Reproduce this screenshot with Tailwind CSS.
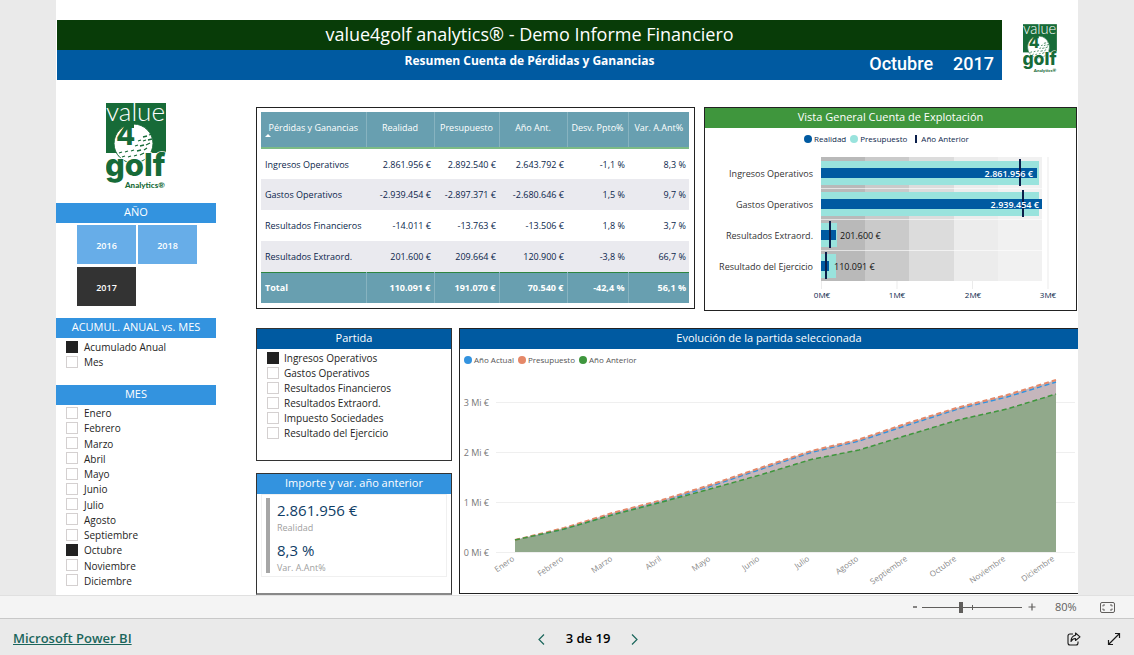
<!DOCTYPE html>
<html lang="es">
<head>
<meta charset="utf-8">
<title>value4golf analytics® - Demo Informe Financiero</title>
<script src="https://cdn.jsdelivr.net/npm/@tailwindcss/browser@4"></script>
</head>
<body class="flex min-h-screen flex-col bg-[#eaeaea] font-['Open_Sans','Noto_Sans',sans-serif] text-[#252423]">

<svg class="hidden" aria-hidden="true">
  <symbol id="logo" viewBox="0 0 62 88">
    <rect width="60" height="50" fill="#176b38"/>
    <text x="0" y="18" font-family="Lato" font-weight="300" font-size="26" fill="#fff">value</text>
    <circle cx="27.500" cy="40.500" r="19.500" fill="#fff" stroke="#176b38" stroke-width="1"/>
    <path d="M22 19h6v6h-6z" fill="#176b38"/>
    <text x="10" y="42" font-family="Inter" font-weight="800" font-size="28" fill="#176b38">4</text>
    <path d="M37 34l4-1M43 32l3-1M32 38l3-1M37 38l3-1M42 37l4-1M29 43l3-1M34 43l4-1M40 42l4-2M13 50l3-1M19 49l3-1M25 48l3-1M31 48l4-1M38 47l3-2M16 54l3-1M22 54l3-1M28 53l3-1M34 52l4-2" stroke="#176b38" stroke-width="1.300"/>
    <text x="-1" y="73" font-family="Inter" font-weight="800" font-size="31" fill="#176b38" stroke="#fff" stroke-width="1.500" paint-order="stroke">golf</text>
    <text x="19" y="85" font-family="Lato" font-weight="900" font-size="8" fill="#176b38" stroke="#fff" stroke-width="1.500" paint-order="stroke">Analytics®</text>
  </symbol>
</svg>

<main class="mx-14 flex-1 bg-white pt-5">
  <header class="flex items-start pl-px">
    <div class="flex-1">
      <h1 class="h-[30px] bg-[#083c08] text-center text-lg leading-[28px] text-white">value4golf analytics® - Demo Informe Financiero</h1>
      <div class="grid h-[30px] grid-cols-[1fr_auto_1fr] bg-[#005aa1] text-white">
        <span></span>
        <h2 class="text-[12px] leading-[21px] font-bold">Resumen Cuenta de Pérdidas y Ganancias</h2>
        <p class="flex justify-end gap-5 pr-2 font-[Roboto] text-lg leading-[27px] font-medium"><span>Octubre</span><span>2017</span></p>
      </div>
    </div>
    <svg class="mt-1 mr-5 ml-[21px] h-[50px] w-[35px]" role="img" aria-label="value4golf Analytics"><use href="#logo"/></svg>
  </header>

  <div class="flex gap-10">
    <aside class="mt-[23px] w-40 shrink-0">
      <svg class="ml-[50px] h-[88px] w-[62px]" role="img" aria-label="value4golf Analytics"><use href="#logo"/></svg>
      <h3 class="mt-3 h-5 bg-[#3393df] text-center text-[11px] leading-[17px] text-white">AÑO</h3>
      <div class="mt-[2px] ml-[21px] grid w-[120px] grid-cols-2 gap-x-[2px] gap-y-[3px] text-[9px] font-semibold text-white">
        <button class="h-[39px] bg-[#67ade8] pt-[2px]">2016</button>
        <button class="h-[39px] bg-[#67ade8] pt-[2px]">2018</button>
        <button class="h-[39px] bg-[#333333] pt-[2px]" aria-pressed="true">2017</button>
      </div>
      <h3 class="mt-3 h-5 bg-[#3393df] text-center text-[11px] leading-[17px] text-white">ACUMUL. ANUAL vs. MES</h3>
      <div class="mt-[2px] pl-[10px] text-[10px] leading-[15px]">
        <label class="flex items-center gap-[6px]"><input type="checkbox" checked class="mb-[2px] size-3 appearance-none border border-[#d4d0d0] checked:border-[#222] checked:bg-[#222]">Acumulado Anual</label>
        <label class="flex items-center gap-[6px]"><input type="checkbox" class="mb-[2px] size-3 appearance-none border border-[#d4d0d0] checked:border-[#222] checked:bg-[#222]">Mes</label>
      </div>
      <h3 class="mt-[15px] h-5 bg-[#3393df] text-center text-[11px] leading-[17px] text-white">MES</h3>
      <div class="mt-px flex h-[183px] flex-col justify-between pl-[10px] text-[10px] leading-[15px]">
        <label class="flex items-center gap-[6px]"><input type="checkbox" class="mb-[2px] size-3 appearance-none border border-[#d4d0d0] checked:border-[#222] checked:bg-[#222]">Enero</label>
        <label class="flex items-center gap-[6px]"><input type="checkbox" class="mb-[2px] size-3 appearance-none border border-[#d4d0d0] checked:border-[#222] checked:bg-[#222]">Febrero</label>
        <label class="flex items-center gap-[6px]"><input type="checkbox" class="mb-[2px] size-3 appearance-none border border-[#d4d0d0] checked:border-[#222] checked:bg-[#222]">Marzo</label>
        <label class="flex items-center gap-[6px]"><input type="checkbox" class="mb-[2px] size-3 appearance-none border border-[#d4d0d0] checked:border-[#222] checked:bg-[#222]">Abril</label>
        <label class="flex items-center gap-[6px]"><input type="checkbox" class="mb-[2px] size-3 appearance-none border border-[#d4d0d0] checked:border-[#222] checked:bg-[#222]">Mayo</label>
        <label class="flex items-center gap-[6px]"><input type="checkbox" class="mb-[2px] size-3 appearance-none border border-[#d4d0d0] checked:border-[#222] checked:bg-[#222]">Junio</label>
        <label class="flex items-center gap-[6px]"><input type="checkbox" class="mb-[2px] size-3 appearance-none border border-[#d4d0d0] checked:border-[#222] checked:bg-[#222]">Julio</label>
        <label class="flex items-center gap-[6px]"><input type="checkbox" class="mb-[2px] size-3 appearance-none border border-[#d4d0d0] checked:border-[#222] checked:bg-[#222]">Agosto</label>
        <label class="flex items-center gap-[6px]"><input type="checkbox" class="mb-[2px] size-3 appearance-none border border-[#d4d0d0] checked:border-[#222] checked:bg-[#222]">Septiembre</label>
        <label class="flex items-center gap-[6px]"><input type="checkbox" checked class="mb-[2px] size-3 appearance-none border border-[#d4d0d0] checked:border-[#222] checked:bg-[#222]">Octubre</label>
        <label class="flex items-center gap-[6px]"><input type="checkbox" class="mb-[2px] size-3 appearance-none border border-[#d4d0d0] checked:border-[#222] checked:bg-[#222]">Noviembre</label>
        <label class="flex items-center gap-[6px]"><input type="checkbox" class="mb-[2px] size-3 appearance-none border border-[#d4d0d0] checked:border-[#222] checked:bg-[#222]">Diciembre</label>
      </div>
    </aside>

    <div class="mt-[27px] min-w-0 flex-1">
      <div class="grid grid-cols-[minmax(0,439fr)_minmax(0,373fr)] items-start gap-[9px] pr-px">
        <section class="border border-[#222] pt-1 pr-[5px] pb-[5px] pl-1">
          <table class="w-full table-fixed text-right text-[9px] leading-[15px] text-[#0b1f4b]">
            <colgroup><col class="w-[105px]"><col class="w-[68px]"><col class="w-[65px]"><col class="w-[68px]"><col class="w-[61px]"><col></colgroup>
            <thead>
              <tr class="h-[36px] border-b-2 border-[#7dbb85] bg-[#689fb0] text-center text-white">
                <th class="relative border-r border-[#87b3c0] pb-[5px] font-normal whitespace-nowrap">Pérdidas y Ganancias
                  <svg class="absolute bottom-[10px] left-1 h-[3px] w-[6px]" viewBox="0 0 6 3"><path d="M0 3L3 0L6 3z" fill="#fff"/></svg></th>
                <th class="border-r border-[#87b3c0] pb-[5px] font-normal whitespace-nowrap">Realidad</th>
                <th class="border-r border-[#87b3c0] pb-[5px] font-normal whitespace-nowrap">Presupuesto</th>
                <th class="border-r border-[#87b3c0] pb-[5px] font-normal whitespace-nowrap">Año Ant.</th>
                <th class="border-r border-[#87b3c0] pb-[5px] font-normal whitespace-nowrap">Desv. Ppto%</th>
                <th class="pb-[5px] font-normal whitespace-nowrap">Var. A.Ant%</th>
              </tr>
            </thead>
            <tbody>
              <tr class="h-[31px]"><td class="pl-1 text-left whitespace-nowrap">Ingresos Operativos</td><td class="pr-[3px]">2.861.956 €</td><td class="pr-[3px]">2.892.540 €</td><td class="pr-[3px]">2.643.792 €</td><td class="pr-[3px]">-1,1 %</td><td class="pr-[3px]">8,3 %</td></tr>
              <tr class="h-[31px] bg-[#eaeaef]"><td class="pl-1 text-left whitespace-nowrap">Gastos Operativos</td><td class="pr-[3px]">-2.939.454 €</td><td class="pr-[3px]">-2.897.371 €</td><td class="pr-[3px]">-2.680.646 €</td><td class="pr-[3px]">1,5 %</td><td class="pr-[3px]">9,7 %</td></tr>
              <tr class="h-[31px]"><td class="pl-1 text-left whitespace-nowrap">Resultados Financieros</td><td class="pr-[3px]">-14.011 €</td><td class="pr-[3px]">-13.763 €</td><td class="pr-[3px]">-13.506 €</td><td class="pr-[3px]">1,8 %</td><td class="pr-[3px]">3,7 %</td></tr>
              <tr class="h-[31px] bg-[#eaeaef]"><td class="pl-1 text-left whitespace-nowrap">Resultados Extraord.</td><td class="pr-[3px]">201.600 €</td><td class="pr-[3px]">209.664 €</td><td class="pr-[3px]">120.900 €</td><td class="pr-[3px]">-3,8 %</td><td class="pr-[3px]">66,7 %</td></tr>
            </tbody>
            <tfoot>
              <tr class="h-[31px] border-t border-[#2e8540] bg-[#689fb0] font-bold text-white"><th scope="row" class="border-r border-[#87b3c0] pl-1 text-left">Total</th><td class="border-r border-[#87b3c0] pr-[3px]">110.091 €</td><td class="border-r border-[#87b3c0] pr-[3px]">191.070 €</td><td class="border-r border-[#87b3c0] pr-[3px]">70.540 €</td><td class="border-r border-[#87b3c0] pr-[3px]">-42,4 %</td><td class="pr-[3px]">56,1 %</td></tr>
            </tfoot>
          </table>
        </section>

        <section class="border border-[#222]">
          <h3 class="h-5 bg-[#3f963d] text-center text-[11px] leading-[18px] text-white">Vista General Cuenta de Explotación</h3>
          <div class="flex h-[22px] items-center justify-center gap-1 pr-2 text-[8px] text-[#0b1f4b]">
            <span class="flex items-center gap-[2px]"><i class="size-2 rounded-full bg-[#005aa1]"></i>Realidad</span>
            <span class="flex items-center gap-[2px]"><i class="size-2 rounded-full bg-[#99e3dd]"></i>Presupuesto</span>
            <span class="ml-1 flex items-center gap-1"><i class="h-2 w-[2px] bg-[#0b1f4b]"></i>Año Anterior</span>
          </div>
          <svg class="block h-auto w-full" viewBox="705 150 371 160" font-size="9" fill="#333" role="img" aria-label="Realidad, presupuesto y año anterior por partida">
            <path d="M821.500 157V289M897 157V289M972.500 157V289M1048 157V289" stroke="#ebebeb" stroke-width="1"/>
            <g>
              <rect x="821" y="157" width="44" height="124" fill="#b9b9b9"/>
              <rect x="865" y="157" width="44" height="124" fill="#cacaca"/>
              <rect x="909" y="157" width="45" height="124" fill="#dcdcdc"/>
              <rect x="954" y="157" width="44" height="124" fill="#ececec"/>
              <rect x="998" y="157" width="44" height="124" fill="#f1f1f1"/>
              <path d="M821 188.500H1042M821 219.500H1042M821 250.500H1042" stroke="#fff" stroke-opacity=".6"/>
            </g>
            <g fill="#99e3dd">
              <rect x="821" y="161" width="218" height="24"/><rect x="821" y="192" width="218" height="24"/>
              <rect x="821" y="223" width="16" height="24"/><rect x="821" y="254" width="15" height="24"/>
            </g>
            <g fill="#005aa1">
              <rect x="821" y="168" width="216" height="10"/><rect x="821" y="199" width="221" height="10"/>
              <rect x="821" y="230" width="15" height="10"/><rect x="821" y="261" width="8" height="10"/>
            </g>
            <path d="M1020 159V186M1023 190V217M830 221V248M826 252V279" stroke="#0b1f4b" stroke-width="2"/>
            <g text-anchor="end" font-weight="600" fill="#fff"><text x="1033" y="177">2.861.956 €</text><text x="1039" y="208">2.939.454 €</text></g>
            <g fill="#111"><text x="840" y="239">201.600 €</text><text x="834" y="270">110.091 €</text></g>
            <g text-anchor="end">
              <text x="813" y="177">Ingresos Operativos</text><text x="813" y="208">Gastos Operativos</text>
              <text x="813" y="239">Resultados Extraord.</text><text x="813" y="270">Resultado del Ejercicio</text>
            </g>
            <g text-anchor="middle" fill="#0b1f4b" font-size="8"><text x="822" y="298">0M€</text><text x="897" y="298">1M€</text><text x="973" y="298">2M€</text><text x="1048" y="298">3M€</text></g>
          </svg>
        </section>
      </div>

      <div class="mt-[17px] grid grid-cols-[196px_1fr] gap-[7px]">
        <div class="flex flex-col gap-3">
          <section class="h-[133px] border border-[#333]">
            <h3 class="h-5 bg-[#005aa1] text-center text-[11px] leading-[18px] text-white">Partida</h3>
            <div class="mt-[2px] pl-[10px] text-[10px] leading-[15px]">
              <label class="flex items-center gap-[5px]"><input type="checkbox" checked class="mb-[2px] size-3 appearance-none border border-[#d4d0d0] checked:border-[#222] checked:bg-[#222]">Ingresos Operativos</label>
              <label class="flex items-center gap-[5px]"><input type="checkbox" class="mb-[2px] size-3 appearance-none border border-[#d4d0d0] checked:border-[#222] checked:bg-[#222]">Gastos Operativos</label>
              <label class="flex items-center gap-[5px]"><input type="checkbox" class="mb-[2px] size-3 appearance-none border border-[#d4d0d0] checked:border-[#222] checked:bg-[#222]">Resultados Financieros</label>
              <label class="flex items-center gap-[5px]"><input type="checkbox" class="mb-[2px] size-3 appearance-none border border-[#d4d0d0] checked:border-[#222] checked:bg-[#222]">Resultados Extraord.</label>
              <label class="flex items-center gap-[5px]"><input type="checkbox" class="mb-[2px] size-3 appearance-none border border-[#d4d0d0] checked:border-[#222] checked:bg-[#222]">Impuesto Sociedades</label>
              <label class="flex items-center gap-[5px]"><input type="checkbox" class="mb-[2px] size-3 appearance-none border border-[#d4d0d0] checked:border-[#222] checked:bg-[#222]">Resultado del Ejercicio</label>
            </div>
          </section>
          <section class="h-[122px] border border-b-2 border-[#333] border-b-[#888]">
            <h3 class="h-5 bg-[#3393df] text-center text-[11px] leading-[18px] text-white">Importe y var. año anterior</h3>
            <div class="mx-1 flex gap-[7px] border border-[#f0f0f0] px-1 py-[3px]">
              <i class="w-1 bg-[#a6a6a6]"></i>
              <dl class="flex flex-col">
                <dd class="text-[15px] leading-6 text-[#0f3d66]">2.861.956 €</dd>
                <dt class="text-[9px] leading-3 text-[#a0a0a0]">Realidad</dt>
                <dd class="mt-1 text-[15px] leading-6 text-[#0f3d66]">8,3 %</dd>
                <dt class="text-[9px] leading-[11px] text-[#a0a0a0]">Var. A.Ant%</dt>
              </dl>
            </div>
          </section>
        </div>

        <section class="self-start border border-r-0 border-[#222]">
          <h3 class="h-5 bg-[#005aa1] text-center text-[11px] leading-[18px] text-white">Evolución de la partida seleccionada</h3>
          <div class="flex h-[21px] items-center gap-1 pl-1 text-[8px] text-[#555]">
            <span class="flex items-center gap-[2px]"><i class="size-2 rounded-full bg-[#3393df]"></i>Año Actual</span>
            <span class="flex items-center gap-[2px]"><i class="size-2 rounded-full bg-[#e58868]"></i>Presupuesto</span>
            <span class="flex items-center gap-[2px]"><i class="size-2 rounded-full bg-[#3f963d]"></i>Año Anterior</span>
          </div>
          <svg class="block h-auto w-full" viewBox="460 370 618 223" font-size="8" fill="#777" role="img" aria-label="Evolución mensual acumulada">
            <path d="M496 402.500H1075M496 452.500H1075M496 502.500H1075M496 552.500H1075" stroke="#efefef"/>
            <path d="M515 552V540L564 528L614 512.500L662 500L710 485L760 468L811 451L859 439.500L908 423L958 407.500L1007 395L1056 380V552z" fill="#c5b6bc"/>
            <path d="M515 552V540L564 529L614 514.500L662 502L710 489L760 475L811 459.500L859 450L908 435L958 420L1007 409L1056 394V552z" fill="#91a98b"/>
            <g fill="none" stroke-width="1.500" stroke-dasharray="5 3">
              <path stroke="#3393df" d="M515 540L564 529L614 514L662 501.500L710 486.500L760 469.500L811 452.500L859 441L908 425L958 409L1007 397L1056 382"/>
              <path stroke="#e58868" stroke-width="2" d="M515 540L564 528L614 512.500L662 500L710 485L760 468L811 451L859 439.500L908 423L958 407.500L1007 395L1056 380"/>
              <path stroke="#3f963d" d="M515 540L564 529L614 514.500L662 502L710 489L760 475L811 459.500L859 450L908 435L958 420L1007 409L1056 394"/>
            </g>
            <g text-anchor="end" font-size="9">
              <text x="489" y="406">3 Mi €</text><text x="489" y="456">2 Mi €</text><text x="489" y="506">1 Mi €</text><text x="489" y="556">0 Mi €</text>
            </g>
            <g text-anchor="end" fill="#888">
              <text transform="translate(515 560) rotate(-35)">Enero</text>
              <text transform="translate(564 560) rotate(-35)">Febrero</text>
              <text transform="translate(613 560) rotate(-35)">Marzo</text>
              <text transform="translate(662 560) rotate(-35)">Abril</text>
              <text transform="translate(711 560) rotate(-35)">Mayo</text>
              <text transform="translate(760 560) rotate(-35)">Junio</text>
              <text transform="translate(810 560) rotate(-35)">Julio</text>
              <text transform="translate(859 560) rotate(-35)">Agosto</text>
              <text transform="translate(908 560) rotate(-35)">Septiembre</text>
              <text transform="translate(957 560) rotate(-35)">Octubre</text>
              <text transform="translate(1006 560) rotate(-35)">Noviembre</text>
              <text transform="translate(1055 560) rotate(-35)">Diciembre</text>
            </g>
          </svg>
        </section>
      </div>
    </div>
  </div>
</main>

<div class="flex h-6 items-center justify-end border-y border-t-[#e0e0e0] border-b-[#c8c8c8] bg-[#f4f4f4] pr-[19px] text-[#605e5c]">
  <button class="flex w-[14px] justify-center" aria-label="Alejar"><svg class="size-[10px]" viewBox="0 0 10 10"><path d="M3 5h4" stroke="#605e5c" stroke-width="1.500"/></svg></button>
  <div class="relative flex w-[100px] items-center">
    <input type="range" min="0" max="100" value="39" aria-label="Zoom" class="h-3 w-full appearance-none bg-transparent [&::-webkit-slider-runnable-track]:h-px [&::-webkit-slider-runnable-track]:bg-[#605e5c] [&::-webkit-slider-thumb]:-mt-[5px] [&::-webkit-slider-thumb]:h-[11px] [&::-webkit-slider-thumb]:w-1 [&::-webkit-slider-thumb]:appearance-none [&::-webkit-slider-thumb]:bg-[#605e5c]">
    <i class="pointer-events-none absolute left-1/2 h-[5px] w-px bg-[#605e5c]"></i>
  </div>
  <button class="ml-[5px] flex w-[10px] justify-center" aria-label="Acercar"><svg class="size-[10px]" viewBox="0 0 10 10"><path d="M1.500 5h7M5 1.500v7" stroke="#605e5c" stroke-width="1.200"/></svg></button>
  <span class="ml-[18px] w-[26px] text-[11px]">80%</span>
  <button class="ml-[19px]" aria-label="Ajustar a la página"><svg class="h-[11px] w-[15px]" viewBox="0 0 15 11" fill="none" stroke="#605e5c"><rect x=".5" y=".5" width="14" height="10" rx="1.500"/><path d="M5 3H3v1.500M3 6.500V8h2M10 3h2v1.500M12 6.500V8h-2"/></svg></button>
</div>

<footer class="grid h-9 grid-cols-[1fr_auto_1fr] items-center bg-[#eaeaea] pt-1 pr-[13px] pl-[13px]">
  <a href="#" class="justify-self-start text-[13px] font-semibold text-[#1b665c] underline">Microsoft Power BI</a>
  <nav class="flex items-center gap-[21px] pl-[42px] text-[13px] font-semibold text-black" aria-label="Páginas">
    <button aria-label="Anterior"><svg class="h-[11px] w-[7px]" viewBox="0 0 7 11" fill="none" stroke="#1b665c" stroke-width="1.200"><path d="M6 .5L1 5.500L6 10.500"/></svg></button>
    <span>3 de 19</span>
    <button aria-label="Siguiente"><svg class="h-[11px] w-[7px]" viewBox="0 0 7 11" fill="none" stroke="#1b665c" stroke-width="1.200"><path d="M1 .5L6 5.500L1 10.500"/></svg></button>
  </nav>
  <div class="flex items-center gap-[26px] justify-self-end">
    <button aria-label="Compartir"><svg class="size-[14px]" viewBox="0 0 14 14" fill="none" stroke="#1a1a1a" stroke-width="1.100" stroke-linejoin="round"><path d="M6 2H3Q1 2 1 4v7q0 2 2 2h6q2 0 2-2V9.500"/><path d="M8.500 1L13 4.800L8.500 8.500V6.500Q5.500 6.500 4 9.500Q4 4 8.500 3.200z"/></svg></button>
    <button aria-label="Pantalla completa"><svg class="size-[14px]" viewBox="0 0 14 14" fill="none" stroke="#1a1a1a" stroke-width="1.200"><path d="M1.500 12.500L12.500 1.500M8 1.500h4.500V6M1.500 8v4.500H6"/></svg></button>
  </div>
</footer>
</body>
</html>
